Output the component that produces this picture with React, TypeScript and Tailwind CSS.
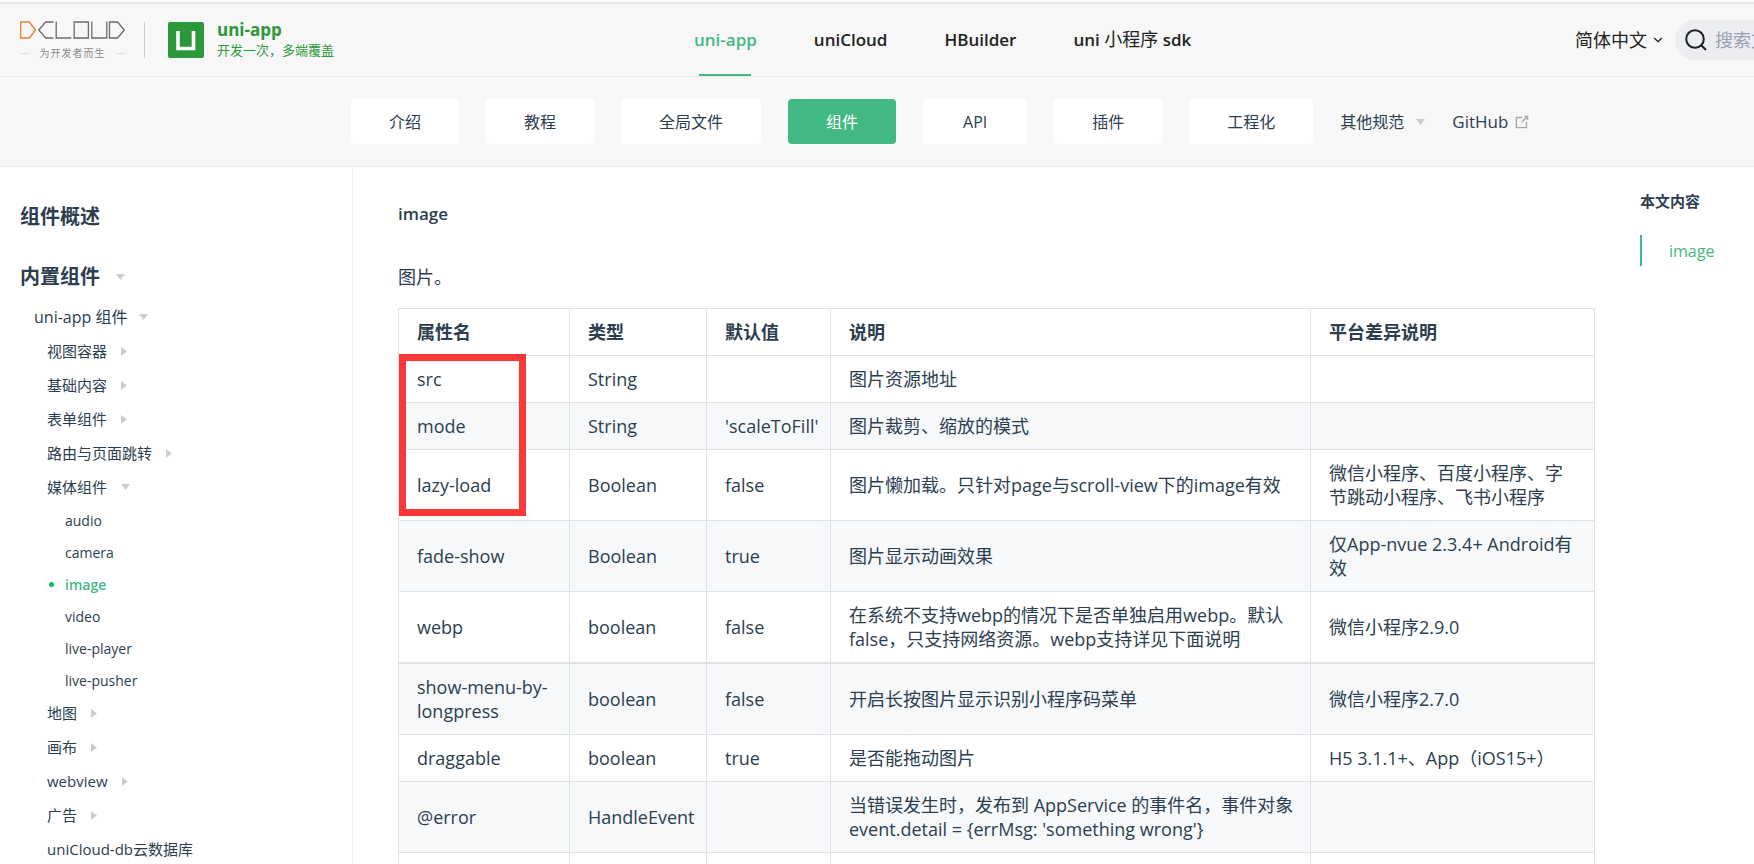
import clsx from "clsx";
import { ChevronDown } from "lucide-react";

const subNav = ["介绍", "教程", "全局文件", "组件", "API", "插件", "工程化"];

type Item = { text: string; arrow?: "down" | "right"; children?: string[] };

const sidebar: Item[] = [
    { text: "视图容器", arrow: "right" },
    { text: "基础内容", arrow: "right" },
    { text: "表单组件", arrow: "right" },
    { text: "路由与页面跳转", arrow: "right" },
    {
        text: "媒体组件",
        arrow: "down",
        children: ["audio", "camera", "image", "video", "live-player", "live-pusher"],
    },
    { text: "地图", arrow: "right" },
    { text: "画布", arrow: "right" },
    { text: "webview", arrow: "right" },
    { text: "广告", arrow: "right" },
    { text: "uniCloud-db云数据库" },
];

const columns = ["属性名", "类型", "默认值", "说明", "平台差异说明"];

const rows = [
    ["src", "String", "", "图片资源地址", ""],
    ["mode", "String", "'scaleToFill'", "图片裁剪、缩放的模式", ""],
    ["lazy-load", "Boolean", "false", "图片懒加载。只针对page与scroll-view下的image有效", "微信小程序、百度小程序、字节跳动小程序、飞书小程序"],
    ["fade-show", "Boolean", "true", "图片显示动画效果", "仅App-nvue 2.3.4+ Android有效"],
    ["webp", "boolean", "false", "在系统不支持webp的情况下是否单独启用webp。默认false，只支持网络资源。webp支持详见下面说明", "微信小程序2.9.0"],
    ["show-menu-by-longpress", "boolean", "false", "开启长按图片显示识别小程序码菜单", "微信小程序2.7.0"],
    ["draggable", "boolean", "true", "是否能拖动图片", "H5 3.1.1+、App（iOS15+）"],
    ["@error", "HandleEvent", "", "当错误发生时，发布到 AppService 的事件名，事件对象event.detail = {errMsg: 'something wrong'}", ""],
    ["", "", "", "", ""],
];

function Arrow({ dir }: { dir: "down" | "right" }) {
    return dir === "down" ? (
        <svg width="9" height="6" viewBox="0 0 9 6" fill="#ccc" aria-hidden="true">
            <path d="M0 0h9L4.500 6z" />
        </svg>
    ) : (
        <svg width="6" height="9" viewBox="0 0 6 9" fill="#ccc" aria-hidden="true">
            <path d="M0 0v9l6-4.500z" />
        </svg>
    );
}

function DCloudLogo() {
    return (
        <a href="#" className="flex flex-col gap-2 w-[105px]" aria-label="DCloud">
            <svg width="105" height="18" viewBox="0 0 105 18" fill="none" stroke="#6b6b6b" strokeWidth="1.3">
                <path d="M.7 1h8.6l6.2 8-6.2 8H.7z" stroke="#ee7a30" />
                <path d="M33.5 1h-7.8l-7 8 7 8h7.8" />
                <path d="M36.2.5V17h15" />
                <path d="M54.2 1h14.2v16H54.2z" />
                <path d="M71.8.5V17h15V.5" />
                <path d="M89.5 1h8l6.8 8-6.8 8h-8z" />
            </svg>
            <span className="flex items-center justify-between text-[10px] leading-[12px] tracking-widest text-[#8a8a8a]">
                <span className="w-[9px] h-px bg-[#ddd]" />
                为开发者而生
                <span className="w-[9px] h-px bg-[#ddd]" />
            </span>
        </a>
    );
}

function NavLink({ active, children }: { active?: boolean; children: React.ReactNode }) {
    return (
        <a
            href="#"
            className={clsx("flex flex-col items-center justify-between h-full whitespace-nowrap", active && "text-[#42b983]")}
        >
            <span className="h-[2px]" />
            <span>{children}</span>
            <span className={clsx("w-[52px] h-[2px]", active && "bg-[#42b983]")} />
        </a>
    );
}

function Header() {
    return (
        <header className="shrink-0 mt-[2px] h-[75px] border-t-2 border-t-[#e5e5e5] border-b border-b-[#e8e8e8] bg-[#f7f7f7] flex items-center pl-5 overflow-hidden">
            <div className="flex items-center shrink-0 w-[674px]">
                <DCloudLogo />
                <span className="w-px h-9 bg-[#ccc] ml-[19px] mr-[23px]" />
                <a href="#" className="flex items-center gap-[13px] text-[#2b9939]">
                    <svg width="36" height="36" viewBox="0 0 36 36" aria-hidden="true">
                        <rect width="36" height="36" rx="2" fill="#2b9939" />
                        <path d="M10 9v17.5h15.500V9" fill="none" stroke="#fff" strokeWidth="3.6" />
                    </svg>
                    <span className="flex flex-col">
                        <span className="text-[17px] leading-5 font-bold">uni-app</span>
                        <span className="text-[13px] leading-5">开发一次，多端覆盖</span>
                    </span>
                </a>
            </div>

            <nav className="flex gap-[57px] h-full shrink-0 text-[17px] font-semibold text-[#222]">
                <NavLink active>uni-app</NavLink>
                <NavLink>uniCloud</NavLink>
                <NavLink>HBuilder</NavLink>
                <NavLink>
                    uni <span className="text-lg leading-6 font-normal">小程序</span> sdk
                </NavLink>
            </nav>

            <div className="flex items-center gap-[10px] shrink-0 w-[179px] ml-auto">
                <button type="button" className="flex items-center gap-1 shrink-0 text-lg text-[#222]">
                    简体中文
                    <ChevronDown className="w-[14px] h-[14px]" strokeWidth={2} />
                </button>
                <label className="flex items-center gap-2 shrink-0 w-[190px] h-10 rounded-full bg-[#ebedf1] pl-[10px]">
                    <svg width="22" height="22" viewBox="0 0 22 22" fill="none" stroke="#1c1e21" strokeWidth="2" className="shrink-0" aria-label="搜索">
                        <circle cx="10" cy="10" r="8.800" />
                        <path d="M16.200 16.200L21 21" />
                    </svg>
                    <input type="search" placeholder="搜索文档" className="w-32 bg-transparent outline-none text-lg placeholder:text-[#9aa0b4]" />
                </label>
            </div>
        </header>
    );
}

function SubNav() {
    return (
        <nav className="shrink-0 h-[90px] border-b border-[#eaecef] bg-[#f7f7f7] flex items-center gap-[27px] pl-[351px] text-base whitespace-nowrap">
            {subNav.map((item) => (
                <a
                    key={item}
                    href="#"
                    className={clsx(
                        "h-[45px] rounded flex items-center",
                        item === "组件" ? "bg-[#42b983] text-white" : "bg-white",
                        item === "API" ? "px-10 font-medium" : "px-[38px]"
                    )}
                >
                    {item}
                </a>
            ))}
            <button type="button" className="flex items-center gap-3">
                其他规范
                <Arrow dir="down" />
            </button>
            <a href="#" className="flex items-center gap-[5px] text-[17px] font-medium">
                GitHub
                <svg width="18" height="18" viewBox="0 0 100 100" fill="#aaa" aria-hidden="true">
                    <path d="M18.8,85.1h56l0,0c2.2,0,4-1.8,4-4v-32h-8v28h-48v-48h28v-8h-32l0,0c-2.2,0-4,1.8-4,4v56C14.8,83.3,16.6,85.1,18.8,85.1z" />
                    <path d="M45.7,48.7 51.3,54.3 77.2,28.5 77.2,37.2 85.2,37.2 85.2,14.9 62.8,14.9 62.8,22.900 71.5,22.9z" />
                </svg>
            </a>
        </nav>
    );
}

function Sidebar() {
    return (
        <aside className="shrink-0 w-[353px] border-r border-[#eaecef] pt-5 overflow-hidden">
            <a href="#" className="flex items-center h-[60px] pl-5 text-xl font-bold">组件概述</a>
            <a href="#" className="flex items-center gap-4 h-[60px] pl-5 text-xl font-bold">
                内置组件
                <Arrow dir="down" />
            </a>
            <a href="#" className="flex items-center gap-3 h-5 pl-[34px] text-base">
                uni-app 组件
                <Arrow dir="down" />
            </a>
            <ul className="pt-[7px] text-[15px]">
                {sidebar.map((item) => (
                    <li key={item.text}>
                        <a href="#" className="flex items-center gap-[14px] h-[34px] pl-[47px]">
                            {item.text}
                            {item.arrow && <Arrow dir={item.arrow} />}
                        </a>
                        {item.children && (
                            <ul className="text-[14px]">
                                {item.children.map((child) => (
                                    <li key={child}>
                                        <a
                                            href="#"
                                            className={clsx(
                                                "flex items-center h-8",
                                                child === "image" ? "pl-[49px] gap-[11px] text-[#42b983] font-semibold" : "pl-[65px]"
                                            )}
                                        >
                                            {child === "image" && <span className="w-[5px] h-[5px] rounded-full bg-[#07c160]" />}
                                            {child}
                                        </a>
                                    </li>
                                ))}
                            </ul>
                        )}
                    </li>
                ))}
            </ul>
        </aside>
    );
}

function PropsTable() {
    return (
        <div className="relative mt-[17px]">
            <table className="w-full table-fixed border-collapse text-left leading-6">
                <colgroup>
                    <col className="w-[171px]" />
                    <col className="w-[137px]" />
                    <col className="w-[124px]" />
                    <col className="w-[480px]" />
                    <col />
                </colgroup>
                <thead>
                    <tr>
                        {columns.map((c) => (
                            <th key={c} className="border border-[#dfe2e5] pl-[18px] pr-4 py-[11px] font-bold">{c}</th>
                        ))}
                    </tr>
                </thead>
                <tbody>
                    {rows.map((row, i) => (
                        <tr key={i} className={clsx("h-[47px] even:bg-[#f6f8fa]", row[0] === "webp" && "border-b-2 border-[#dfe2e5]")}>
                            {row.map((cell, j) => (
                                <td key={j} className="border border-[#dfe2e5] pl-[18px] pr-4 py-[11px]">{cell}</td>
                            ))}
                        </tr>
                    ))}
                </tbody>
            </table>
            {/* highlight around the first three props */}
            <div className="absolute left-px top-[46px] w-[127px] h-[162px] border-[7px] border-[#fa3838]" />
        </div>
    );
}

export default function App() {
    return (
        <div className="h-screen flex flex-col overflow-hidden bg-white text-[#2c3e50] font-['Open_Sans','Noto_Sans_CJK_SC',sans-serif]">
            <Header />
            <SubNav />
            <div className="flex flex-1 min-h-0">
                <Sidebar />
                <main className="flex-1 min-w-0 pl-[45px] pt-[33px] overflow-hidden text-lg">
                    <h1 className="text-[17px] leading-7 font-semibold">image</h1>
                    <p className="mt-[35px] leading-7">图片。</p>
                    <PropsTable />
                </main>
                <aside className="shrink-0 w-[159px] pl-[45px] pt-[22px]">
                    <h2 className="text-[15px] leading-6 font-bold">本文内容</h2>
                    <a href="#" className="mt-[22px] flex items-center h-[31px] border-l-2 border-[#42b983] pl-[27px] text-base text-[#42b983]">image</a>
                </aside>
            </div>
        </div>
    );
}
